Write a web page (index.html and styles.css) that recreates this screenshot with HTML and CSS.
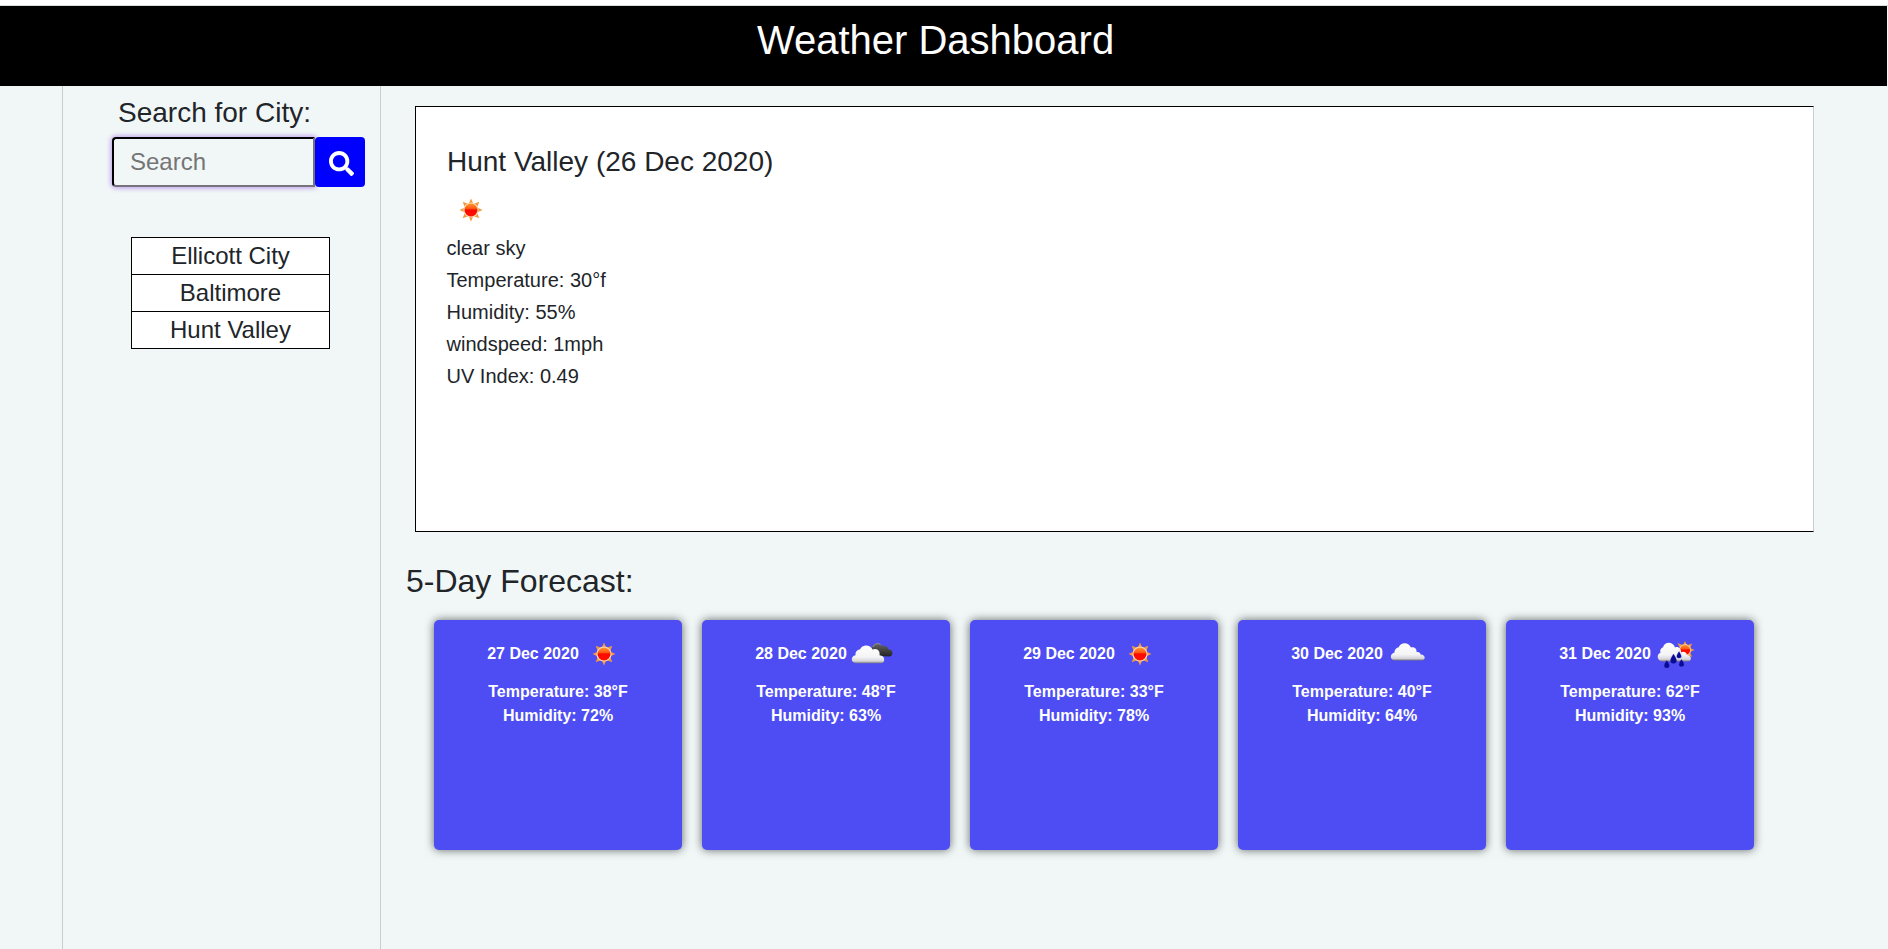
FILE: index.html
```
<!DOCTYPE html>
<html lang="en">
<head>
<meta charset="utf-8">
<title>Weather Dashboard</title>
<link rel="stylesheet" href="styles.css">
</head>
<body>
<svg width="0" height="0" class="defs" aria-hidden="true">
  <defs>
    <linearGradient id="fire" x1="0" y1="0" x2="0" y2="1"><stop offset="0" stop-color="#ff9838"/><stop offset=".38" stop-color="#ff5a10"/><stop offset=".5" stop-color="#fb0800"/><stop offset="1" stop-color="#ff1000"/></linearGradient>
    <linearGradient id="white" x1="0" y1="0" x2="0" y2="1"><stop offset="0" stop-color="#fff"/><stop offset=".65" stop-color="#f4f4f6"/><stop offset=".88" stop-color="#d5d5da"/><stop offset="1" stop-color="#77777c"/></linearGradient>
    <linearGradient id="dark" x1="0" y1="0" x2="0" y2="1"><stop offset="0" stop-color="#666"/><stop offset=".5" stop-color="#444"/><stop offset="1" stop-color="#222"/></linearGradient>
    <symbol id="sun" viewBox="0 0 50 50">
      <path fill="#f0993f" d="M25 13.500l2.400 5.500h-4.800zM25 36.500l2.400-5.500h-4.800zM13.500 25l5.500-2.400v4.800zM36.500 25l-5.500-2.400v4.800zM16.700 16.700l6 2.300-3.700 3.700zM33.300 16.700l-2.300 6-3.700-3.700zM16.700 33.300l6-2.300-3.700-3.700zM33.300 33.300l-2.300-6-3.700 3.700z"/>
      <circle cx="25" cy="25" r="7.600" fill="#ffdcb4"/>
      <circle cx="25" cy="25" r="6.500" fill="url(#fire)"/>
    </symbol>
    <symbol id="cloud" viewBox="0 0 50 50">
      <path fill="url(#white)" d="M12.500 31.500C6.500 31.500 6.500 24.500 11.500 23.500C11.500 20 14 18.500 15.500 18.500C17.500 13 25.500 12.500 28 18.500C31.500 17.500 34 20 33.500 23C36.500 22.500 37.800 24.500 37.500 25.500C43 25.500 43 31.500 38.500 31.500Z"/>
    </symbol>
    <symbol id="broken" viewBox="0 0 50 50">
      <path fill="url(#dark)" d="M25 21C24 14 32 12 35 17C38.500 16 41 18 41.500 20.200C47 20.500 46.500 27.500 42 27.500L33 27Z"/>
      <path fill="none" stroke="#aaa" stroke-width=".8" d="M26 18C27.500 14.500 31.500 14 33.500 15.500"/>
      <path fill="url(#white)" d="M9 34.300C3.500 34 3.500 27 8.500 26.300C8 21.500 12 20.300 13 20.500C15 15 23.500 15.300 25.500 20.500C30 18.500 33.500 22 32.500 26.300C38.500 26.500 38.500 34.300 34 34.300Z"/>
    </symbol>
    <symbol id="rain" viewBox="0 0 50 50">
      <path fill="#f39a3c" d="M34 12l2.300 5h-4.600zM34 32l2.300-5h-4.600zM24 21l5-2v4zM43.500 21l-5-2.300v4.600zM26.500 14l5 2-2.500 3zM41 14.500l-2 5.500-3.500-3.500zM41 28l-2-5.500-3.500 3.500z"/>
      <circle cx="34" cy="21" r="6" fill="#ffca90"/><circle cx="34" cy="21" r="5.100" fill="url(#fire)"/>
      <path fill="url(#white)" d="M11.500 32.500C5.500 32 5.500 25 9.500 23.800C8.500 20 11 18.500 12 18.500C13 12.500 22 12 24 18.500C27 17 30.500 19.500 30 23.500C33 21.500 36 24 35.800 26C41 26 41 32.500 37 32.500Z"/>
      <g fill="#0a0a96" stroke="#3030b8" stroke-width=".3"><path d="M22.500 25C26.700 31 26.500 34.500 22.500 34.500S18.300 31 22.500 25Z"/><path d="M28 22.500C31 27 31 29 28 29S25 27 28 22.500Z"/><path d="M15.800 31.500C19.300 36 19 39 15.800 39S12.300 36 15.800 31.500Z"/><path d="M30.500 30.500C33.900 35 33.700 37.500 30.500 37.500S27.100 35 30.500 30.500Z"/></g>
    </symbol>
  </defs>
</svg>
<div class="topline"></div>
<header class="header"><h1>Weather Dashboard</h1></header>
<div class="layout">
  <aside class="sidebar">
    <h3>Search for City:</h3>
    <form class="search">
      <input type="text" placeholder="Search">
      <button type="button" aria-label="Search"><svg viewBox="0 0 512 512"><path fill="#fff" d="M505 442.700L405.300 343c-4.500-4.500-10.600-7-17-7H372c27.600-35.300 44-79.700 44-128C416 93.100 322.900 0 208 0S0 93.100 0 208s93.100 208 208 208c48.300 0 92.700-16.400 128-44v16.300c0 6.400 2.500 12.500 7 17l99.700 99.700c9.400 9.400 24.600 9.400 33.900 0l28.300-28.300c9.400-9.400 9.400-24.600.1-34zM208 336c-70.700 0-128-57.200-128-128 0-70.700 57.200-128 128-128 70.700 0 128 57.200 128 128 0 70.700-57.200 128-128 128z"/></svg></button>
    </form>
    <ul class="cities"><li>Ellicott City</li><li>Baltimore</li><li>Hunt Valley</li></ul>
  </aside>
  <main class="main">
    <section class="current">
      <h3>Hunt Valley (26 Dec 2020)</h3>
      <svg class="wicon"><use href="#sun"/></svg>
      <p>clear sky</p>
      <p>Temperature: 30°f</p>
      <p>Humidity: 55%</p>
      <p>windspeed: 1mph</p>
      <p>UV Index: 0.49</p>
    </section>
    <h2>5-Day Forecast:</h2>
    <section class="forecast">
      <article class="card"><div class="date">27 Dec 2020<svg class="wicon"><use href="#sun"/></svg></div><p>Temperature: 38°F</p><p>Humidity: 72%</p></article>
      <article class="card"><div class="date">28 Dec 2020<svg class="wicon"><use href="#broken"/></svg></div><p>Temperature: 48°F</p><p>Humidity: 63%</p></article>
      <article class="card"><div class="date">29 Dec 2020<svg class="wicon"><use href="#sun"/></svg></div><p>Temperature: 33°F</p><p>Humidity: 78%</p></article>
      <article class="card"><div class="date">30 Dec 2020<svg class="wicon"><use href="#cloud"/></svg></div><p>Temperature: 40°F</p><p>Humidity: 64%</p></article>
      <article class="card"><div class="date">31 Dec 2020<svg class="wicon"><use href="#rain"/></svg></div><p>Temperature: 62°F</p><p>Humidity: 93%</p></article>
    </section>
  </main>
</div>
</body>
</html>
```
FILE: styles.css
```
* { box-sizing: border-box; margin: 0; padding: 0; }
body { height: 949px; overflow: hidden; display: flex; flex-direction: column; background: #f1f7f7; color: #212529; font-family: "Liberation Sans", Arial, sans-serif; }
h1, h2, h3 { font-weight: 400; }
.defs { position: absolute; }
.topline { height: 6px; flex: none; background: #fff; border-bottom: 1px solid #d5dddd; }
.header { height: 80px; flex: none; margin-right: 1px; background: #000; color: #fff; text-align: center; padding: 10px 16px 0 0; }
.header h1 { font-size: 40px; line-height: 48px; }
.layout { flex: 1; display: flex; padding-left: 62px; }
.sidebar { width: 319px; flex: none; border: solid #c9cfd1; border-width: 0 1px; padding: 10px 0 0 49px; }
.sidebar h3 { font-size: 28px; line-height: 34px; padding-left: 6px; }
.search { display: flex; margin-top: 7px; }
.search input { width: 203px; height: 50px; border: 2px inset #767676; border-color: #1f1a24 #77737c #77737c #1f1a24; border-radius: 4px 0 0 4px; background: #f1f7f7; padding: 0 16px; font: 24px "Liberation Sans", Arial, sans-serif; box-shadow: 0 0 5px 1px rgba(150, 90, 230, .6); }
.search input::placeholder { color: #757575; opacity: 1; }
.search button { position: relative; width: 50px; height: 50px; border: 0; border-radius: 4px; background: #00f; display: grid; place-items: center; padding: 2px 0 0 3px; }
.search button svg { width: 25px; height: 25px; }
.cities { list-style: none; width: 199px; margin: 50px 0 0 19px; border: 1px solid #000; background: #fff; }
.cities li { height: 37px; line-height: 36px; font-size: 24px; text-align: center; border-bottom: 1px solid #000; }
.cities li:last-child { height: 36px; border-bottom: 0; }
.main { flex: 1; padding: 20px 74px 0 24px; }
.current { height: 426px; margin-left: 10px; background: #fff; border: 1px solid #000; border-right-color: #c9cfd1; padding: 37px 30px; }
.current h3 { font-size: 28px; line-height: 36px; padding-left: 1px; }
.current p { font-size: 20px; line-height: 32px; padding-left: .5px; }
.wicon { display: block; width: 50px; height: 50px; }
.current .wicon { margin: 5px 0 -3px; }
.main h2 { font-size: 32px; line-height: 38px; margin-top: 30px; padding-left: 1px; }
.forecast { display: flex; gap: 20px; margin: 20px 0 0 29px; }
.card { width: 248px; height: 230px; border-radius: 5px; background: #4d4df3; color: #fff; box-shadow: 0 0 10px rgba(0, 0, 0, .6); font-size: 16px; font-weight: 700; line-height: 24px; text-align: center; padding-top: 9px; }
.date { display: flex; align-items: center; justify-content: center; height: 50px; }
.date + p { margin-top: 1px; }
```
